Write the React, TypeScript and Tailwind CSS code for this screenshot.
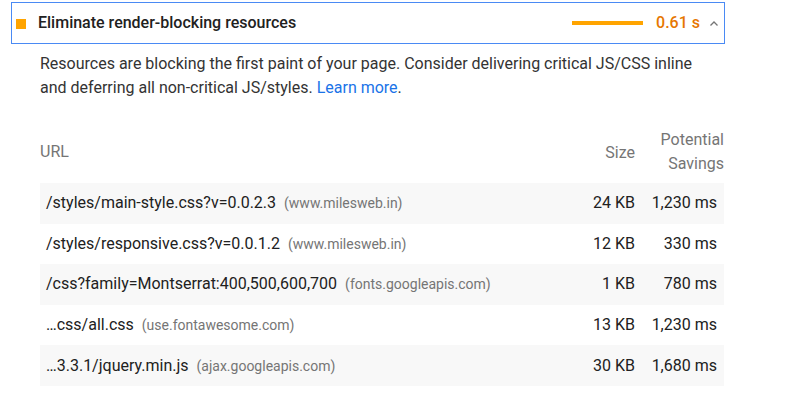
import React from 'react';

const rows = [
  { url: '/styles/main-style.css?v=0.0.2.3', host: '(www.milesweb.in)', size: '24 KB', savings: '1,230 ms' },
  { url: '/styles/responsive.css?v=0.0.1.2', host: '(www.milesweb.in)', size: '12 KB', savings: '330 ms' },
  { url: '/css?family=Montserrat:400,500,600,700', host: '(fonts.googleapis.com)', size: '1 KB', savings: '780 ms' },
  { url: '…css/all.css', host: '(use.fontawesome.com)', size: '13 KB', savings: '1,230 ms' },
  { url: '…3.3.1/jquery.min.js', host: '(ajax.googleapis.com)', size: '30 KB', savings: '1,680 ms' },
];

export default function App() {
  return (
    <div className="w-[789px] h-[393px] bg-white pt-[2px] font-['Roboto',sans-serif] overflow-hidden">
      {/* Audit header */}
      <div className="ml-[11px] w-[714px] h-[42px] border border-[#4a8af4] flex items-center pl-[4px] pr-[5px]">
        <div className="w-[10px] h-[10px] bg-[#ffa400] mt-[1px]" />
        <span className="ml-[12px] text-[16px] font-medium text-[#212121]">
          Eliminate render-blocking resources
        </span>
        <div className="ml-auto w-[71px] h-[4px] bg-[#ffa400]" />
        <span className="ml-[13px] text-[16px] font-medium text-[#e67700]">0.61 s</span>
        <svg className="ml-[9px] mt-[1px]" width="10" height="10" viewBox="0 0 10 10">
          <path d="M1.5 6.5 L5 3 L8.5 6.5" fill="none" stroke="#757575" strokeWidth="1.3" />
        </svg>
      </div>

      {/* Description */}
      <p className="ml-[40px] mt-[8px] w-[680px] text-[16px] leading-[24px] text-[#333333]">
        Resources are blocking the first paint of your page. Consider delivering critical JS/CSS inline
        <br />
        and deferring all non-critical JS/styles. <span className="text-[#1a73e8]">Learn more</span>.
      </p>

      {/* Table */}
      <div className="ml-[40px] w-[684px] mt-[23px]">
        <div className="flex items-center h-[60px] text-[16px] text-[#757575]">
          <div className="flex-1 pb-[2px]">URL</div>
          <div className="w-[60px] text-right pr-[1px]">Size</div>
          <div className="w-[88px] text-right leading-[24px] pb-[3px]">
            Potential
            <br />
            Savings
          </div>
        </div>
        {rows.map((r, i) => (
          <div
            key={r.url}
            className={`flex items-center h-[40.6px] text-[16px] text-[#212121] ${i % 2 === 0 ? 'bg-[#f8f8f8]' : 'bg-white'}`}
          >
            <div className="flex-1 pl-[6px] whitespace-nowrap">
              {r.url}
              <span className="ml-[8px] text-[14px] text-[#757575]">{r.host}</span>
            </div>
            <div className="w-[60px] text-right pr-[1px]">{r.size}</div>
            <div className="w-[88px] text-right pr-[7px]">{r.savings}</div>
          </div>
        ))}
      </div>
    </div>
  );
}
